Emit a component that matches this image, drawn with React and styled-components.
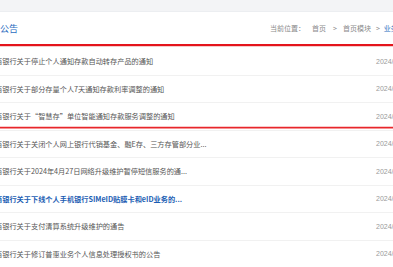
import React from "react";
import styled, { createGlobalStyle } from "styled-components";

const Global = createGlobalStyle`
  html, body { margin: 0; padding: 0; background: #fff; }
  body { width: 393px; height: 267px; overflow: hidden; font-family: "Noto Sans CJK SC", "Noto Sans", sans-serif; }
`;

const Page = styled.div`
  width: 433px;
  margin-left: -5px;
`;

const TopBand = styled.div`
  height: 11px;
  background: #f3f4f6;
  border-bottom: 1px solid #eceef1;
`;

const Header = styled.div`
  display: flex;
  align-items: center;
  height: 32px;
  padding-left: 5px;
  border-bottom: 2px solid #e4141c;
  box-shadow: 0 1px 0 #f6cccc;
`;

const Title = styled.div`
  flex: 1;
  font-size: 9px;
  color: #2a6cc0;
  line-height: 1;
`;

const Crumbs = styled.div`
  width: 158px;
  flex-shrink: 0;
  display: flex;
  align-items: center;
  white-space: nowrap;
  overflow: hidden;
  font-size: 7px;
  color: #8a8a8a;
`;

const Crumb = styled.span`
  color: ${(p) => (p.$current ? "#2a6cc0" : "#8a8a8a")};
  margin-right: ${(p) => p.$gap || 0}px;
`;

const List = styled.div`
  padding-top: 2px;
`;

const Row = styled.div`
  display: flex;
  align-items: center;
  height: 26.5px;
  border-bottom: 1px solid #f1f1f1;
  box-shadow: ${(p) =>
    p.$marked ? "inset 0 -1.6px 0 #fff, inset 0 -3.2px 0 #e8262b" : "none"};
`;

const RowTitle = styled.div`
  flex: 1;
  font-size: 7.2px;
  white-space: nowrap;
  overflow: hidden;
  color: ${(p) => (p.$hot ? "#1b5db3" : "#555")};
  font-weight: ${(p) => (p.$hot ? 700 : 400)};
`;

const RowDate = styled.div`
  width: 52px;
  flex-shrink: 0;
  font-family: "Liberation Sans", Arial, sans-serif;
  font-size: 7px;
  color: #9a9a9a;
`;

const Lead = styled.span`
  display: inline-block;
  width: 7.2px;
`;

const rows = [
  { t: "商银行关于停止个人通知存款自动转存产品的通知", d: "2024/05/10" },
  { t: "商银行关于部分存量个人7天通知存款利率调整的通知", d: "2024/05/06" },
  { t: "商银行关于“智慧存”单位智能通知存款服务调整的通知", d: "2024/04/30", marked: true },
  { t: "商银行关于关闭个人网上银行代销基金、融E存、三方存管部分业...", d: "2024/04/28" },
  { t: "商银行关于2024年4月27日网络升级维护暂停短信服务的通...", d: "2024/04/25" },
  { t: "商银行关于下线个人手机银行SIMeID贴膜卡和eID业务的...", d: "2024/04/22", hot: true },
  { t: "商银行关于支付清算系统升级维护的通告", d: "2024/04/18" },
  { t: "商银行关于修订普惠业务个人信息处理授权书的公告", d: "2024/04/12" },
];

export default function App() {
  return (
    <>
      <Global />
      <Page>
        <TopBand />
        <Header>
          <Title>公告</Title>
          <Crumbs>
            <Crumb $gap={7}>当前位置：</Crumb>
            <Crumb $gap={7}>首页</Crumb>
            <Crumb $gap={6}>&gt;</Crumb>
            <Crumb $gap={5}>首页模块</Crumb>
            <Crumb $gap={4}>&gt;</Crumb>
            <Crumb $current>业务公告</Crumb>
          </Crumbs>
        </Header>
        <List>
          {rows.map((r, i) => (
            <Row key={i} $marked={r.marked}>
              <RowTitle $hot={r.hot}>
                <Lead>{r.t[0]}</Lead>
                {r.t.slice(1)}
              </RowTitle>
              <RowDate>{r.d}</RowDate>
            </Row>
          ))}
        </List>
      </Page>
    </>
  );
}
